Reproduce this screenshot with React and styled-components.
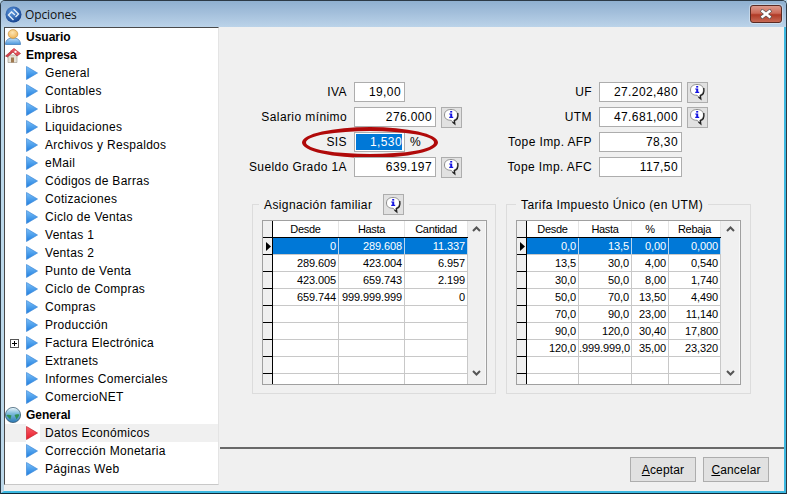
import styled, { createGlobalStyle } from "styled-components";

const GlobalStyle = createGlobalStyle`
  html, body { margin: 0; padding: 0; background: #b9d7ea; }
  * { box-sizing: border-box; }
`;

const Window = styled.div`
  width: 787px;
  height: 494px;
  display: flex;
  flex-direction: column;
  overflow: hidden;
  font-family: "Liberation Sans", Arial, sans-serif;
  font-size: 12px;
  color: #000;
  background: #bcd8ea;
  border: 1px solid #2c3a46;
  border-bottom: 1px solid #0e2a38;
  border-radius: 5px 5px 0 0;
`;

const TitleBar = styled.div`
  height: 26px;
  flex: none;
  display: flex;
  align-items: center;
  padding: 0 4px 0 4px;
  background: linear-gradient(#8fb0d0, #a3bfdb 45%, #bbd3e9);
`;

const TitleText = styled.span`
  margin-left: 3px;
  font-family: "Open Sans", sans-serif;
  font-size: 12px;
  letter-spacing: -0.1px;
  color: #111;
  flex: 1;
`;

const CloseButton = styled.div`
  width: 32px;
  height: 18px;
  margin-top: -1px;
  display: flex;
  align-items: center;
  justify-content: center;
  border: 1px solid #5b2a22;
  border-radius: 3px;
  background: linear-gradient(#dc9a8c, #cc6a58 45%, #b03a26 55%, #c76a55);
  box-shadow: 0 0 0 1px rgba(255, 255, 255, 0.35);
`;

const Body = styled.div`
  flex: 1;
  min-height: 0;
  display: flex;
  align-items: flex-start;
  background: #f0f0f0;
  border-left: 3px solid #bcd8ea;
  border-right: 2px solid #3cb8e0;
  border-bottom: 2px solid #3cb8e0;
`;

const Tree = styled.div`
  width: 215px;
  flex: none;
  height: 458px;
  background: #fff;
  border-top: 1px solid #4a4a4a;
  border-left: 1px solid #4a4a4a;
  border-bottom: 1px solid #c8c8c8;
  border-right: 1px solid #e4e4e4;
`;

const TreeRow = styled.div`
  height: 18px;
  display: flex;
  align-items: center;
  font-weight: ${(p) => (p.$parent ? "700" : "400")};
  letter-spacing: ${(p) => (p.$parent ? "0" : "0.3px")};
  background: ${(p) => (p.$active ? "#f0f0f0" : "transparent")};
`;

const Expander = styled.span`
  width: 21px;
  flex: none;
  display: flex;
  justify-content: center;
`;

const PlusBox = styled.span`
  width: 9px;
  height: 9px;
  margin-right: 3px;
  border: 1px solid #555;
  background: #fff;
  position: relative;
  &::before {
    content: "";
    position: absolute;
    left: 1px;
    right: 1px;
    top: 3px;
    height: 1px;
    background: #000;
  }
  &::after {
    content: "";
    position: absolute;
    top: 1px;
    bottom: 1px;
    left: 3px;
    width: 1px;
    background: #000;
  }
`;

const ArrowSlot = styled.span`
  width: 14px;
  height: 18px;
  margin-right: 5px;
  flex: none;
  display: flex;
  align-items: center;
  background: ${(p) => (p.$active ? "#fff" : "transparent")};
`;

const ParentIcon = styled.span`
  width: 16px;
  height: 16px;
  margin: 0 5px 0 0;
  flex: none;
  display: flex;
`;

const Content = styled.div`
  flex: 1;
  align-self: stretch;
  min-width: 0;
  display: flex;
  flex-direction: column;
  background: #f0f0f0;
`;

const Fields = styled.div`
  display: flex;
  padding-top: 55px;
`;

const FieldColumn = styled.div`
  width: ${(p) => p.$width}px;
  display: flex;
  flex-direction: column;
  gap: 5px;
  letter-spacing: 0.4px;
`;

const FieldRow = styled.div`
  height: 20px;
  display: flex;
  align-items: center;
  position: relative;
`;

const FieldLabel = styled.span`
  width: ${(p) => p.$width}px;
  flex: none;
  margin-right: 7px;
  text-align: right;
`;

const Input = styled.div`
  width: ${(p) => p.$width}px;
  height: 20px;
  flex: none;
  display: flex;
  align-items: center;
  justify-content: flex-end;
  padding-right: 3px;
  background: #fff;
  border: 1px solid #adadad;
`;

const SelectedValue = styled.span`
  flex: 1;
  height: 16px;
  margin: 0 -1px 0 1px;
  line-height: 16px;
  text-align: right;
  color: #fff;
  background: #0078d7;
`;

const Unit = styled.span`
  margin-left: 5px;
`;

const InfoButton = styled.div`
  width: 21px;
  height: 21px;
  flex: none;
  margin-left: 5px;
  display: flex;
  align-items: center;
  justify-content: center;
  background: #e1e1e1;
  border: 1px solid #adadad;
`;

const Oval = styled.div`
  position: absolute;
  left: 83px;
  top: -5px;
  width: 136px;
  height: 31px;
  border: 4px solid #b00a0a;
  border-radius: 50%;
  pointer-events: none;
`;

const Groups = styled.div`
  display: flex;
  gap: 10px;
  margin-top: 17px;
  padding-left: 33px;
`;

const Group = styled.fieldset`
  width: ${(p) => p.$width}px;
  height: 200px;
  margin: 0;
  padding: 5px 9px 0 9px;
  border: 1px solid #dcdcdc;
  min-width: 0;
`;

const Legend = styled.legend`
  display: flex;
  align-items: center;
  height: 21px;
  margin-left: ${(p) => p.$offset}px;
  padding: 0 5px 0 5px;
  font-size: 12px;
  letter-spacing: 0.4px;
  ${InfoButton} {
    margin-left: 11px;
  }
`;

const DataGrid = styled.div`
  width: 225px;
  height: 165px;
  display: flex;
  background: #fff;
  border: 1px solid #a0a0a0;
  overflow: hidden;
  font-size: 11px;
`;

const GridBody = styled.div`
  flex: 1;
  min-width: 0;
`;

const GridRow = styled.div`
  display: grid;
  grid-template-columns: ${(p) => p.$cols};
  height: 17px;
  background: ${(p) => (p.$selected ? "#0078d7" : "#fff")};
  color: ${(p) => (p.$selected ? "#fff" : "#000")};
  border-bottom: 1px solid ${(p) => (p.$header ? "#000" : "#c8c8c8")};
  letter-spacing: ${(p) => (p.$header ? "-0.3px" : "-0.1px")};
`;

const Indicator = styled.div`
  background: #f0f0f0;
  border-right: 1px solid #000;
  margin-bottom: -1px;
  border-bottom: 1px solid #000;
  display: flex;
  align-items: center;
  justify-content: flex-end;
  padding-right: 1px;
`;

const Cell = styled.div`
  padding: ${(p) => (p.$header ? "0" : "0 2px 0 0")};
  line-height: 16px;
  text-align: ${(p) => (p.$header ? "center" : "right")};
  border-right: 1px solid ${(p) => (p.$selected ? "#b7d6f0" : p.$header ? "#e4e4e4" : "#c8c8c8")};
  white-space: nowrap;
`;

const ScrollBar = styled.div`
  width: ${(p) => p.$width}px;
  flex: none;
  background: #f0f0f0;
  border-right: 1px solid #f8f8f8;
  display: flex;
  flex-direction: column;
  justify-content: space-between;
  align-items: center;
  padding: 5px 0 8px;
`;

const Footer = styled.div`
  margin-top: auto;
  height: 44px;
  flex: none;
  display: flex;
  justify-content: flex-end;
  gap: 7px;
  padding: 8px 15px 0 0;
  border-top: 2px solid #696969;
  margin-left: 1px;
`;

const Button = styled.div`
  width: 66px;
  height: 25px;
  display: flex;
  align-items: center;
  justify-content: center;
  background: #e1e1e1;
  border: 1px solid #adadad;
  letter-spacing: 0.15px;
  u {
    text-decoration: underline;
  }
`;

const AppIcon = () => (
  <svg width="17" height="17" viewBox="0 0 17 17">
    <defs>
      <radialGradient id="appBlue" cx="40%" cy="35%" r="70%">
        <stop offset="0" stopColor="#5f9ae0" />
        <stop offset="1" stopColor="#123f8c" />
      </radialGradient>
    </defs>
    <circle cx="8.5" cy="8.5" r="8" fill="url(#appBlue)" />
    <path d="M8.5 3 L13.5 8 L10.5 11 M8.5 14 L3.5 9 L6.5 6 L10 9" fill="none" stroke="#e4eefa" strokeWidth="1.4" />
  </svg>
);

const CloseGlyph = () => (
  <svg width="14" height="10" viewBox="0 0 14 10">
    <path d="M2 1 L12 9 M12 1 L2 9" stroke="#555" strokeWidth="3.6" />
    <path d="M2.5 1.5 L11.5 8.5 M11.5 1.5 L2.5 8.5" stroke="#fff" strokeWidth="2.4" />
  </svg>
);

const UserIcon = () => (
  <svg width="16" height="16" viewBox="0 0 16 16">
    <defs>
      <linearGradient id="userBody" x1="0" y1="0" x2="0" y2="1">
        <stop offset="0" stopColor="#c4e2fa" />
        <stop offset="1" stopColor="#4a96dc" />
      </linearGradient>
      <radialGradient id="userHead" cx="45%" cy="35%" r="70%">
        <stop offset="0" stopColor="#fde6b4" />
        <stop offset="1" stopColor="#eeb050" />
      </radialGradient>
    </defs>
    <path d="M0.5 15.5 C0.5 10.5 4 9 8 9 C12 9 15.5 10.5 15.5 15.5 Z" fill="url(#userBody)" stroke="#3a78b8" strokeWidth="0.7" />
    <ellipse cx="8" cy="5" rx="4.8" ry="4.4" fill="url(#userHead)" stroke="#c9923a" strokeWidth="0.7" />
  </svg>
);

const HouseIcon = () => (
  <svg width="16" height="16" viewBox="0 0 16 16">
    <path d="M3 8 L3 15.5 L12 15.5 L12 8 Z" fill="#e6e1d6" stroke="#9a9488" strokeWidth="0.6" />
    <path d="M0.5 9 L9 1.5 L15.5 6.5 L12 9 L8 5 L2.5 10 Z" fill="#d8404a" stroke="#96262e" strokeWidth="0.6" />
    <path d="M5 4 L9 1.5 L15 6.5 L12 8.5 L8 4.5 Z" fill="#e2505a" />
    <rect x="9.5" y="3.8" width="2" height="2" fill="#fff" />
    <rect x="6" y="10.5" width="3" height="5" fill="#a07a50" />
  </svg>
);

const GlobeIcon = () => (
  <svg width="16" height="16" viewBox="0 0 16 16">
    <defs>
      <linearGradient id="globeBlue" x1="0" y1="0" x2="0" y2="1">
        <stop offset="0" stopColor="#eef7fb" />
        <stop offset="0.4" stopColor="#7fbcdc" />
        <stop offset="1" stopColor="#2a78b4" />
      </linearGradient>
    </defs>
    <circle cx="8" cy="8" r="7.6" fill="url(#globeBlue)" stroke="#2a4f66" strokeWidth="0.7" />
    <path d="M1.5 8 C3 7.4 5 7.6 6.5 8.6 C6 10 5.6 11 5.4 12.5 C4 11.5 2.6 10 1.5 8.6 Z M9.5 8 C11 7.2 13 7.2 14.6 7.8 C14 9.4 12.6 10.4 11.6 12.6 C10.8 11 10.4 9.4 9.5 8 Z" fill="#2f9055" />
  </svg>
);

const TriangleIcon = ({ red }) => {
  const id = red ? "triRed" : "triBlue";
  return (
    <svg width="12" height="14" viewBox="0 0 12 14">
      <defs>
        <linearGradient id={id} x1="0" y1="0" x2="0" y2="1">
          <stop offset="0" stopColor={red ? "#f8606a" : "#7cc0f8"} />
          <stop offset="1" stopColor={red ? "#e81c2c" : "#1f7fe0"} />
        </linearGradient>
      </defs>
      <path d="M0.5 0.5 L11.5 7 L0.5 13.5 Z" fill={`url(#${id})`} stroke={red ? "#c4222c" : "#3f8ad8"} strokeWidth="0.7" />
    </svg>
  );
};

const InfoIcon = () => (
  <svg width="17" height="18" viewBox="0 0 17 18">
    <path
      d="M8 1.5 C12 1.5 14.5 3.5 14.5 7 C14.5 10 12.5 11.7 11 12 L11.5 15.5 L8 12.3 C4 12.3 1.5 10.5 1.5 7 C1.5 3.5 4 1.5 8 1.5 Z"
      fill="#fff"
      stroke="#777"
      strokeWidth="0.8"
    />
    <path d="M14.8 5 C15.5 9.5 13.5 12 11.4 12.6 L11.8 16 L9.5 14" fill="none" stroke="#222" strokeWidth="1.3" />
    <rect x="7.2" y="3" width="2" height="1.6" fill="#1414e0" />
    <path d="M6.2 5.4 H9.2 V8.8 H10.2 V10 H6.2 V8.8 H7.2 V6.5 H6.2 Z" fill="#1414e0" />
  </svg>
);

const RowPointer = () => (
  <svg width="5" height="9" viewBox="0 0 5 9">
    <path d="M0 0 L5 4.5 L0 9 Z" fill="#000" />
  </svg>
);

const Chevron = ({ down }) => (
  <svg width="9" height="6" viewBox="0 0 9 6">
    <path d={down ? "M1 1 L4.5 4.5 L8 1" : "M1 5 L4.5 1.5 L8 5"} fill="none" stroke="#555" strokeWidth="2" />
  </svg>
);

const treeItems = [
  { label: "Usuario", parent: <UserIcon /> },
  { label: "Empresa", parent: <HouseIcon /> },
  { label: "General" },
  { label: "Contables" },
  { label: "Libros" },
  { label: "Liquidaciones" },
  { label: "Archivos y Respaldos" },
  { label: "eMail" },
  { label: "Códigos de Barras" },
  { label: "Cotizaciones" },
  { label: "Ciclo de Ventas" },
  { label: "Ventas 1" },
  { label: "Ventas 2" },
  { label: "Punto de Venta" },
  { label: "Ciclo de Compras" },
  { label: "Compras" },
  { label: "Producción" },
  { label: "Factura Electrónica", expand: true },
  { label: "Extranets" },
  { label: "Informes Comerciales" },
  { label: "ComercioNET" },
  { label: "General", parent: <GlobeIcon /> },
  { label: "Datos Económicos", active: true },
  { label: "Corrección Monetaria" },
  { label: "Páginas Web" },
];

const familyRows = [
  ["0", "289.608", "11.337"],
  ["289.609", "423.004", "6.957"],
  ["423.005", "659.743", "2.199"],
  ["659.744", "999.999.999", "0"],
  ["", "", ""],
  ["", "", ""],
  ["", "", ""],
  ["", "", ""],
  ["", "", ""],
];

const taxRows = [
  ["0,0", "13,5", "0,00", "0,000"],
  ["13,5", "30,0", "4,00", "0,540"],
  ["30,0", "50,0", "8,00", "1,740"],
  ["50,0", "70,0", "13,50", "4,490"],
  ["70,0", "90,0", "23,00", "11,140"],
  ["90,0", "120,0", "30,40", "17,800"],
  ["120,0", ".999.999,0", "35,00", "23,320"],
  ["", "", "", ""],
  ["", "", "", ""],
];

const Table = ({ cols, headers, rows, scrollWidth }) => (
  <DataGrid>
    <GridBody>
      <GridRow $cols={cols} $header>
        <Indicator />
        {headers.map((h) => (
          <Cell key={h} $header>
            {h}
          </Cell>
        ))}
      </GridRow>
      {rows.map((row, i) => (
        <GridRow key={i} $cols={cols} $selected={i === 0}>
          <Indicator>{i === 0 && <RowPointer />}</Indicator>
          {row.map((v, j) => (
            <Cell key={j} $selected={i === 0}>
              {v}
            </Cell>
          ))}
        </GridRow>
      ))}
    </GridBody>
    <ScrollBar $width={scrollWidth}>
      <Chevron />
      <Chevron down />
    </ScrollBar>
  </DataGrid>
);

export default function App() {
  return (
    <Window>
      <GlobalStyle />
      <TitleBar>
        <AppIcon />
        <TitleText>Opciones</TitleText>
        <CloseButton>
          <CloseGlyph />
        </CloseButton>
      </TitleBar>
      <Body>
        <Tree>
          {treeItems.map((item) => (
            <TreeRow key={item.label + (item.parent ? "p" : "")} $parent={!!item.parent} $active={item.active}>
              {item.parent ? (
                <ParentIcon>{item.parent}</ParentIcon>
              ) : (
                <>
                  <Expander>{item.expand && <PlusBox />}</Expander>
                  <ArrowSlot $active={item.active}>
                    <TriangleIcon red={item.active} />
                  </ArrowSlot>
                </>
              )}
              {item.label}
            </TreeRow>
          ))}
        </Tree>
        <Content>
          <Fields>
            <FieldColumn $width={270}>
              <FieldRow>
                <FieldLabel $width={128}>IVA</FieldLabel>
                <Input $width={51}>19,00</Input>
              </FieldRow>
              <FieldRow>
                <FieldLabel $width={128}>Salario mínimo</FieldLabel>
                <Input $width={82}>276.000</Input>
                <InfoButton>
                  <InfoIcon />
                </InfoButton>
              </FieldRow>
              <FieldRow>
                <FieldLabel $width={128}>SIS</FieldLabel>
                <Input $width={51}>
                  <SelectedValue>1,530</SelectedValue>
                </Input>
                <Unit>%</Unit>
                <Oval />
              </FieldRow>
              <FieldRow>
                <FieldLabel $width={128}>Sueldo Grado 1A</FieldLabel>
                <Input $width={82}>639.197</Input>
                <InfoButton>
                  <InfoIcon />
                </InfoButton>
              </FieldRow>
            </FieldColumn>
            <FieldColumn $width={290}>
              <FieldRow>
                <FieldLabel $width={103}>UF</FieldLabel>
                <Input $width={83}>27.202,480</Input>
                <InfoButton>
                  <InfoIcon />
                </InfoButton>
              </FieldRow>
              <FieldRow>
                <FieldLabel $width={103}>UTM</FieldLabel>
                <Input $width={83}>47.681,000</Input>
                <InfoButton>
                  <InfoIcon />
                </InfoButton>
              </FieldRow>
              <FieldRow>
                <FieldLabel $width={103}>Tope Imp. AFP</FieldLabel>
                <Input $width={83}>78,30</Input>
              </FieldRow>
              <FieldRow>
                <FieldLabel $width={103}>Tope Imp. AFC</FieldLabel>
                <Input $width={83}>117,50</Input>
              </FieldRow>
            </FieldColumn>
          </Fields>
          <Groups>
            <Group $width={244}>
              <Legend $offset={-3}>
                Asignación familiar
                <InfoButton>
                  <InfoIcon />
                </InfoButton>
              </Legend>
              <Table
                cols="10px 66px 66px 63px"
                headers={["Desde", "Hasta", "Cantidad"]}
                rows={familyRows}
                scrollWidth={18}
              />
            </Group>
            <Group $width={245}>
              <Legend $offset={0}>Tarifa Impuesto Único (en UTM)</Legend>
              <Table
                cols="10px 52px 53px 37px 52px"
                headers={["Desde", "Hasta", "%", "Rebaja"]}
                rows={taxRows}
                scrollWidth={19}
              />
            </Group>
          </Groups>
          <Footer>
            <Button>
              <span>
                <u>A</u>ceptar
              </span>
            </Button>
            <Button>
              <span>
                <u>C</u>ancelar
              </span>
            </Button>
          </Footer>
        </Content>
      </Body>
    </Window>
  );
}
